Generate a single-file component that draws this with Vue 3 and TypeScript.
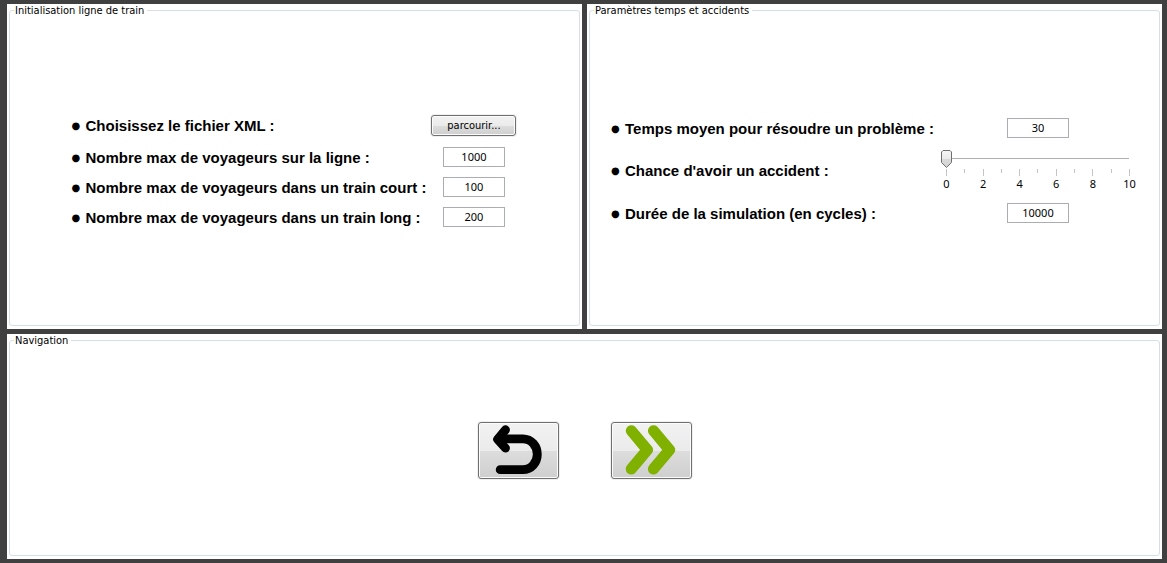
<script setup lang="ts">
import { ref } from 'vue'

interface NumberField {
  id: string
  label: string
  value: string
}

const capacityFields = ref<NumberField[]>([
  { id: 'max-line', label: 'Nombre max de voyageurs sur la ligne :', value: '1000' },
  { id: 'max-short', label: 'Nombre max de voyageurs dans un train court :', value: '100' },
  { id: 'max-long', label: 'Nombre max de voyageurs dans un train long :', value: '200' },
])

const repairTime = ref('30')
const accidentChance = ref(0)
const duration = ref('10000')

const ticks: number[] = Array.from({ length: 11 }, (_, i) => i)
</script>

<template>
  <main class="window">
    <section class="panel">
      <fieldset class="group">
        <legend>Initialisation ligne de train</legend>
        <div class="form">
          <label class="caption" for="browse"><span class="bullet">●</span>Choisissez le fichier XML :</label>
          <button id="browse" type="button" class="btn browse">parcourir...</button>
          <template v-for="field in capacityFields" :key="field.id">
            <label class="caption" :for="field.id"><span class="bullet">●</span>{{ field.label }}</label>
            <input :id="field.id" v-model="field.value" class="box" type="text" inputmode="numeric" />
          </template>
        </div>
      </fieldset>
    </section>

    <section class="panel">
      <fieldset class="group">
        <legend>Paramètres temps et accidents</legend>
        <div class="form">
          <label class="caption" for="repair"><span class="bullet">●</span>Temps moyen pour résoudre un problème :</label>
          <input id="repair" v-model="repairTime" class="box" type="text" inputmode="numeric" />

          <label class="caption" for="chance"><span class="bullet">●</span>Chance d'avoir un accident :</label>
          <div class="slider">
            <input id="chance" v-model.number="accidentChance" class="range" type="range" min="0" max="10" />
            <div class="scale">
              <span v-for="t in ticks" :key="t" class="tick" :class="{ major: t % 2 === 0 }">
                <span v-if="t % 2 === 0" class="mark">{{ t }}</span>
              </span>
            </div>
          </div>

          <label class="caption" for="duration"><span class="bullet">●</span>Durée de la simulation (en cycles) :</label>
          <input id="duration" v-model="duration" class="box" type="text" inputmode="numeric" />
        </div>
      </fieldset>
    </section>

    <section class="panel wide">
      <fieldset class="group">
        <legend>Navigation</legend>
        <nav class="actions">
          <button type="button" class="btn" aria-label="Retour">
            <svg class="icon" viewBox="18 13 79 55" fill="none" stroke="#000" stroke-linecap="round" stroke-linejoin="round">
              <path d="M37 28.4H62C71 28.4 77 36 77 44.4S71 60.4 62 60.4H38.5" stroke-width="9.2" />
              <path d="M44 19L35.800 28.800L44 38" stroke-width="9.2" />
            </svg>
          </button>
          <button type="button" class="btn" aria-label="Suivant">
            <svg class="icon" viewBox="16 13 79 55" fill="none" stroke="#80b000" stroke-width="11.6" stroke-linecap="round" stroke-linejoin="round">
              <path d="M34.6 20L51.2 39.9L34.6 59.6" />
              <path d="M57.6 20L74.2 39.9L57.6 59.6" />
            </svg>
          </button>
        </nav>
      </fieldset>
    </section>
  </main>
</template>

<style>
body {
  margin: 0;
  background: #404040;
}
</style>

<style scoped>
.window {
  box-sizing: border-box;
  min-height: 100vh;
  display: grid;
  grid-template-columns: 1fr 1fr;
  grid-template-rows: 13fr 9fr;
  gap: 5px;
  padding: 4px 5px 4px 7px;
  background: #404040;
  color: #000;
  font: 11px/13px Tahoma, "Noto Sans", sans-serif;
}

.panel {
  display: flex;
  padding: 0 2px 3px;
  background: #fff;
}

.wide {
  grid-column: 1 / -1;
}

.group {
  flex: 1;
  min-width: 0;
  margin: 0;
  padding: 0 4px 2px;
  border: 1px solid #d5dfe5;
  border-radius: 3px;
  display: flex;
  align-items: center;
  justify-content: center;
}

legend {
  padding: 1px 3px 0 1px;
  line-height: 12px;
  font-family: Tahoma, "DejaVu Sans Condensed", sans-serif;
}

.form {
  display: grid;
  grid-template-columns: auto auto;
  gap: 10px 4px;
  align-items: center;
}

.caption {
  display: flex;
  align-items: center;
  padding-top: 2px;
  font: bold 15px/18px "Liberation Sans", Arial, sans-serif;
  white-space: nowrap;
}

.bullet {
  width: 14px;
  font: 10px/18px "DejaVu Sans", sans-serif;
}

.box {
  box-sizing: border-box;
  justify-self: center;
  width: 62px;
  height: 20px;
  padding: 0 2px;
  border: 1px solid #abadb3;
  background: #fff;
  color: #000;
  font: inherit;
  text-align: center;
}

.btn {
  padding: 1px;
  border: 1px solid #707070;
  border-radius: 3px;
  margin: 1px;
  background: linear-gradient(#f2f2f2, #ebebeb 50%, #dddddd 50%, #cfcfcf);
  box-shadow: inset 0 0 0 1px #fbfbfb, 0 0 0 1px #f0f0f0;
  color: #000;
  font: inherit;
}

.browse {
  min-width: 85px;
  height: 21px;
  font-family: Tahoma, "DejaVu Sans Condensed", sans-serif;
}

.slider {
  width: 200px;
  height: 45px;
}

.range {
  display: block;
  appearance: none;
  box-sizing: border-box;
  width: 193px;
  height: 21px;
  margin: 0 3px;
  background: transparent;
}

.range::-webkit-slider-runnable-track {
  height: 17px;
  background: linear-gradient(#b0b0b0, #b0b0b0) 5px 8px / 183px 1px no-repeat;
}

.range::-webkit-slider-thumb {
  appearance: none;
  width: 11px;
  height: 18px;
  background: url("data:image/svg+xml,%3Csvg xmlns='http://www.w3.org/2000/svg' width='11' height='18'%3E%3ClinearGradient id='g' x2='0' y2='1'%3E%3Cstop stop-color='%23f6f6f6'/%3E%3Cstop offset='.5' stop-color='%23ebebeb'/%3E%3Cstop offset='.5' stop-color='%23dadada'/%3E%3Cstop offset='1' stop-color='%23d4d4d4'/%3E%3C/linearGradient%3E%3Cpath d='M2 .5H9L10.500 2V12.500L5.500 17.500L.5 12.500V2Z' fill='url(%23g)' stroke='%23707070'/%3E%3C/svg%3E") no-repeat;
}

.scale {
  display: flex;
  justify-content: space-between;
  margin: 0 8px;
}

.tick {
  display: flex;
  flex-direction: column;
  align-items: center;
  width: 1px;
}

.tick::before {
  content: "";
  width: 1px;
  height: 4px;
  background: #c4c4c4;
}

.major::before {
  height: 7px;
}

.mark {
  margin-top: 1px;
}

.actions {
  display: flex;
  gap: 50px;
}

.icon {
  display: block;
  width: 77px;
  height: 53px;
}
</style>
